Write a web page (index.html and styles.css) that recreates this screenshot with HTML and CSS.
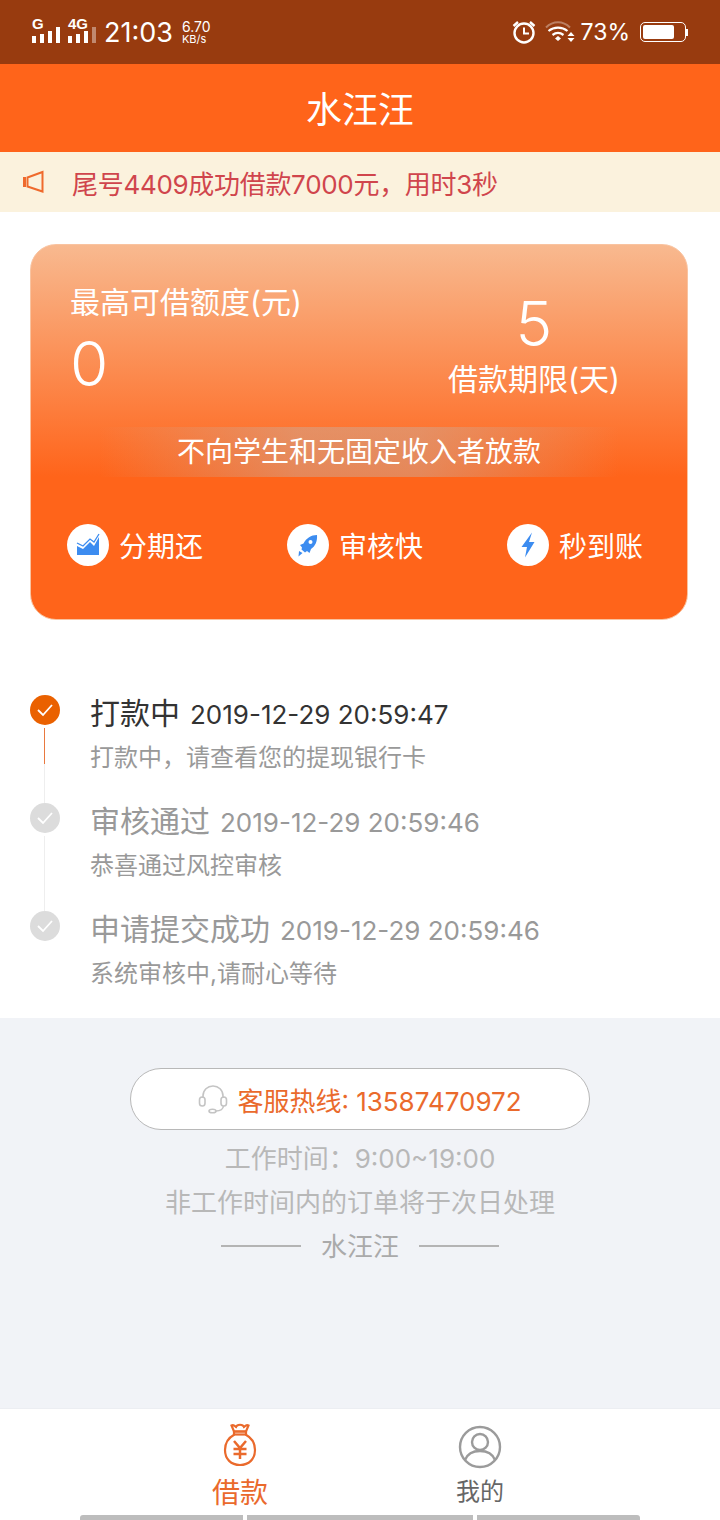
FILE: index.html
```html
<!DOCTYPE html>
<html lang="zh">

<head>
    <meta charset="UTF-8" />
    <meta name="viewport" content="width=device-width, initial-scale=1.0" />
    <title>水汪汪</title>
    <link rel="stylesheet" href="styles.css">
</head>

<body>
    <div class="phone">
        <div class="status-bar">
            <div class="status-left">
                <div class="signal">
                    <span class="net">G</span>
                    <svg class="bars" width="28" height="16" viewBox="0 0 28 16" fill="#fff"><rect x="0" y="9" width="4" height="7"/><rect x="8" y="7" width="4" height="9"/><rect x="16" y="4" width="4" height="12"/><rect x="24" y="0" width="4" height="16"/></svg>
                </div>
                <div class="signal">
                    <span class="net">4G</span>
                    <svg class="bars" width="28" height="16" viewBox="0 0 28 16" fill="#fff"><rect x="0" y="9" width="4" height="7"/><rect x="8" y="7" width="4" height="9"/><rect x="16" y="4" width="4" height="12"/><rect x="24" y="0" width="4" height="16" opacity="0.4"/></svg>
                </div>
                <span class="clock">21:03</span>
                <div class="speed"><span>6.70</span><span class="speed-unit">KB/s</span></div>
            </div>
            <div class="status-right">
                <svg width="24" height="24" viewBox="0 0 24 24" fill="none" stroke="#fff"><circle cx="12" cy="13" r="9.500" stroke-width="2.400"/><path d="M12 7.500V13.500H17" stroke-width="2"/><path d="M1.500 6 6 2M22.500 6 18 2" stroke-width="2.400"/></svg>
                <svg class="wifi" width="30" height="22" viewBox="0 0 30 22" fill="none" stroke="#fff"><path d="M1 6.500C8 -0.500 18 -0.500 25 6.500" stroke-width="2" opacity="0.35"/><path d="M3.500 10C9 5.500 17 5.500 22.500 10" stroke-width="2.200"/><path d="M7.500 14C10.800 11.500 15.200 11.500 18.500 14" stroke-width="2.200"/><path d="M10 17.500 13 15 16 17.500 13 20Z" fill="#fff" stroke="none"/><path d="M26 11 29.500 15H22.500ZM26 21 22.500 17H29.500Z" fill="#fff" stroke="none"/></svg>
                <span class="battery-text">73%</span>
                <div class="battery"><div class="battery-body"><div class="battery-fill"></div></div><div class="battery-tip"></div></div>
            </div>
        </div>

        <div class="title-bar">水汪汪</div>

        <div class="notice">
            <svg width="24" height="24" viewBox="0 0 24 24" fill="none" stroke="#ef6a2c" stroke-width="2"><path d="M5.500 7.500 20.500 2V21.500L5.500 16.500Z"/><path d="M2.500 7V17" stroke-width="3"/></svg>
            <span>尾号4409成功借款7000元，用时3秒</span>
        </div>

        <div class="content">
            <div class="card">
                <div class="card-top">
                    <div class="limit">
                        <div class="card-label">最高可借额度(元)</div>
                        <div class="card-num">0</div>
                    </div>
                    <div class="term">
                        <div class="card-num">5</div>
                        <div class="card-label">借款期限(天)</div>
                    </div>
                </div>
                <div class="card-tip">不向学生和无固定收入者放款</div>
                <div class="features">
                    <div class="feature">
                        <span class="feature-icon">
                            <svg width="26" height="26" viewBox="0 0 26 26"><path d="M2 23V14L8 17 15 10 19 14 24 5V23Z" fill="#3c8cf0"/><path d="M2 11 8 14 15 7 19 10 24 2" fill="none" stroke="#3c8cf0" stroke-width="1.300"/></svg>
                        </span>
                        <span>分期还</span>
                    </div>
                    <div class="feature">
                        <span class="feature-icon">
                            <svg width="26" height="26" viewBox="0 0 26 26"><path d="M22 3C16 3 11.500 6 8.500 11.500L5 13 7 15.500 6.500 17.500 10 20.500 12 19 14.500 21 16 17C20.500 14 22.500 9 22 3Z" fill="#3c8cf0"/><circle cx="15.500" cy="10" r="2" fill="#fff"/><path d="M4 19 7.500 21 3.500 24.500Z" fill="#3c8cf0"/></svg>
                        </span>
                        <span>审核快</span>
                    </div>
                    <div class="feature">
                        <span class="feature-icon">
                            <svg width="26" height="26" viewBox="0 0 26 26"><path d="M17 0.500 6.500 15H12L10 25.500 19.500 10H14Z" fill="#3c8cf0"/></svg>
                        </span>
                        <span>秒到账</span>
                    </div>
                </div>
            </div>

            <div class="timeline">
                <div class="step step-active">
                    <div class="step-mark">
                        <span class="dot"><svg width="18" height="14" viewBox="0 0 18 14" fill="none" stroke="#fff" stroke-width="1.800"><path d="M2 7 7 12 16 2"/></svg></span>
                        <span class="line"><span class="line-fill"></span></span>
                    </div>
                    <div class="step-body">
                        <div class="step-title"><span class="step-name">打款中</span><span>2019-12-29 20:59:47</span></div>
                        <div class="step-desc">打款中，请查看您的提现银行卡</div>
                    </div>
                </div>
                <div class="step">
                    <div class="step-mark">
                        <span class="dot"><svg width="18" height="14" viewBox="0 0 18 14" fill="none" stroke="#fff" stroke-width="1.800"><path d="M2 7 7 12 16 2"/></svg></span>
                        <span class="line"></span>
                    </div>
                    <div class="step-body">
                        <div class="step-title"><span class="step-name">审核通过</span><span>2019-12-29 20:59:46</span></div>
                        <div class="step-desc">恭喜通过风控审核</div>
                    </div>
                </div>
                <div class="step">
                    <div class="step-mark">
                        <span class="dot"><svg width="18" height="14" viewBox="0 0 18 14" fill="none" stroke="#fff" stroke-width="1.800"><path d="M2 7 7 12 16 2"/></svg></span>
                    </div>
                    <div class="step-body">
                        <div class="step-title"><span class="step-name">申请提交成功</span><span>2019-12-29 20:59:46</span></div>
                        <div class="step-desc">系统审核中,请耐心等待</div>
                    </div>
                </div>
            </div>
        </div>

        <div class="footer-area">
            <div class="hotline">
                <svg width="30" height="30" viewBox="0 0 30 30" fill="none" stroke="#c4c4c4" stroke-width="1.600"><path d="M5 14V12C5 6 9.500 2 15 2S25 6 25 12V14"/><rect x="1.500" y="13" width="5.500" height="9" rx="2.700"/><rect x="23" y="13" width="5.500" height="9" rx="2.700"/><path d="M25.500 22C25 25.500 22 27 18 27"/><ellipse cx="14.500" cy="27" rx="3.500" ry="1.800"/></svg>
                <span>客服热线: 13587470972</span>
            </div>
            <div class="foot-line">工作时间：9:00~19:00</div>
            <div class="foot-line">非工作时间内的订单将于次日处理</div>
            <div class="brand"><span class="rule"></span><span>水汪汪</span><span class="rule"></span></div>
        </div>

        <div class="tabbar">
            <div class="tab tab-active">
                <svg width="36" height="44" viewBox="0 0 36 44" fill="none" stroke="#ea6a2c" stroke-width="2.200"><path d="M9.500 2.500C12 1 13 3.500 14 4 15 1 21 1 22 4 23 3.500 24 1 26.500 2.500L24 8.500H12Z"/><rect x="12" y="8.500" width="12" height="3"/><path d="M12.500 11.500C6 15 3 21 3 27C3 36 9 42 18 42S33 36 33 27C33 21 30 15 23.500 11.500"/><path d="M12 18 18 25 24 18M18 25V36M11.500 26H24.500M11.500 31H24.500" stroke-width="2.500"/></svg>
                <span>借款</span>
            </div>
            <div class="tab">
                <svg class="tab-person" width="44" height="44" viewBox="0 0 44 44" fill="none" stroke="#9b9b9b" stroke-width="2.400"><circle cx="22" cy="22" r="20"/><circle cx="22" cy="17" r="8"/><path d="M7 35C9.500 28.500 15 26 22 26S34.500 28.500 37 35"/></svg>
                <span>我的</span>
            </div>
        </div>

        <div class="nav-hint">
            <span class="hint hint-left"></span>
            <span class="hint hint-mid"></span>
            <span class="hint hint-right"></span>
        </div>
    </div>
</body>

</html>
```
FILE: styles.css
```css
* {
    box-sizing: border-box;
}

html,
body {
    margin: 0;
    padding: 0;
}

body {
    font-family: Inter, "Noto Sans CJK SC", sans-serif;
    background-color: #fff;
}

.phone {
    width: 720px;
    height: 1520px;
    display: flex;
    flex-direction: column;
    overflow: hidden;
}

/* status bar */
.status-bar {
    height: 64px;
    flex: none;
    background-color: #983b0f;
    color: #fff;
    display: flex;
    justify-content: space-between;
    align-items: center;
    padding: 0 32px 0 32px;
}

.status-left,
.status-right {
    display: flex;
    align-items: center;
}

.signal {
    width: 36px;
    height: 26px;
    margin-top: -4px;
    position: relative;
    display: flex;
    align-items: flex-end;
}

.net {
    position: absolute;
    top: -2px;
    left: 0;
    font-family: "Liberation Sans", sans-serif;
    font-size: 15px;
    font-weight: 700;
}

.clock {
    font-size: 27px;
    margin-left: 0;
}

.speed {
    display: flex;
    flex-direction: column;
    font-size: 14px;
    line-height: 13px;
    margin: 1px 0 0 9px;
}

.speed-unit {
    font-size: 11px;
}

.status-right {
    gap: 6px;
}

.wifi {
    margin-left: 3px;
}

.battery-text {
    font-size: 23px;
}

.battery {
    display: flex;
    align-items: center;
    margin-left: 4px;
}

.battery-body {
    width: 46px;
    height: 20px;
    border: 1px solid #fff;
    border-radius: 5px;
    padding: 2px;
}

.battery-fill {
    width: 31px;
    height: 14px;
    background-color: #fff;
    border-radius: 2px;
}

.battery-tip {
    width: 2px;
    height: 7px;
    background-color: #fff;
}

/* header */
.title-bar {
    height: 88px;
    flex: none;
    background-color: #ff641a;
    color: #fff;
    font-size: 36px;
    text-align: center;
    line-height: 92px;
}

.notice {
    height: 60px;
    flex: none;
    background-color: #fbf2dd;
    color: #d0454c;
    font-size: 26px;
    letter-spacing: -0.3px;
    display: flex;
    align-items: center;
    gap: 26px;
    padding: 0 0 0 22px;
}

.content {
    flex: none;
    height: 806px;
    background-color: #fff;
    padding: 32px 32px 0 30px;
}

/* orange card */
.card {
    height: 376px;
    border-radius: 26px;
    border: 1px solid #f9c3a0;
    background: linear-gradient(180deg, #f8b98f 0%, #ff641a 62%, #ff641a 100%);
    color: #fff;
    padding: 37px 0 0;
}

.card-top {
    display: flex;
    height: 153px;
}

.limit {
    width: 400px;
    padding-left: 39px;
}

.term {
    flex: 1;
    padding-top: 3px;
    padding-right: 50px;
    text-align: center;
}

.card-label {
    font-size: 30px;
    line-height: 40px;
}

.card-num {
    font-size: 62px;
    font-weight: 300;
    line-height: 62px;
    margin-top: 11px;
}

.term .card-num {
    height: 56px;
    margin-top: 8px;
}

.term .card-label {
    line-height: 36px;
    margin-top: 12px;
}

.card-tip {
    height: 50px;
    margin: -8px 68px 0;
    font-size: 28px;
    line-height: 50px;
    text-align: center;
    background: linear-gradient(90deg, rgba(205, 170, 150, 0) 0%, rgba(205, 170, 150, 0.5) 38%, rgba(205, 170, 150, 0.5) 62%, rgba(205, 170, 150, 0) 100%);
}

.features {
    display: flex;
    justify-content: space-between;
    padding: 47px 44px 0 36px;
}

.feature {
    display: flex;
    align-items: center;
    gap: 10px;
    font-size: 28px;
}

.feature-icon {
    width: 42px;
    height: 42px;
    border-radius: 50%;
    background-color: #fff;
    display: flex;
    align-items: center;
    justify-content: center;
}

/* timeline */
.timeline {
    margin-top: 75px;
}

.step {
    display: flex;
    height: 108px;
    gap: 30px;
}

.step-mark {
    width: 30px;
    flex: none;
    display: flex;
    flex-direction: column;
}

.dot {
    width: 30px;
    height: 30px;
    flex: none;
    border-radius: 50%;
    background-color: #dcdcdc;
    display: flex;
    align-items: center;
    justify-content: center;
}

.step-active .dot {
    background-color: #ea6100;
}

.line {
    width: 1px;
    flex: 1;
    margin: 3px 0 0 14px;
    background-color: #eee;
}

.line-fill {
    display: block;
    height: 36px;
    background-color: #e9793f;
}

.step-title {
    font-size: 26px;
    line-height: 36px;
    color: #999;
    display: flex;
    align-items: center;
    gap: 10px;
    margin-top: 2px;
}

.step-name {
    font-size: 30px;
    margin-top: -4px;
}

.step-active .step-title {
    color: #333;
}

.step-desc {
    font-size: 24px;
    line-height: 30px;
    margin-top: 10px;
    color: #999;
}

/* footer */
.footer-area {
    flex: 1;
    background-color: #f1f3f7;
    display: flex;
    flex-direction: column;
    align-items: center;
    padding-top: 50px;
}

.hotline {
    width: 460px;
    height: 62px;
    flex: none;
    border: 1px solid #b8b8b8;
    border-radius: 31px;
    background-color: #fff;
    color: #ea6a2c;
    font-size: 26px;
    display: flex;
    align-items: center;
    justify-content: center;
    gap: 9px;
}

.foot-line {
    font-size: 26px;
    line-height: 44px;
    color: #b8b8b8;
}

.hotline + .foot-line {
    margin-top: 7px;
}

.brand {
    display: flex;
    align-items: center;
    gap: 20px;
    font-size: 26px;
    line-height: 44px;
    color: #aaa;
}

.rule {
    width: 80px;
    height: 2px;
    margin-top: -2px;
    background-color: #b4b4b4;
}

/* bottom tabs */
.tabbar {
    height: 107px;
    flex: none;
    background-color: #fff;
    border-top: 1px solid #eceef2;
    display: flex;
    padding-top: 14px;
}

.tab {
    flex: none;
    width: 240px;
    display: flex;
    flex-direction: column;
    align-items: center;
    color: #666;
    font-size: 24px;
    gap: 3px;
}

.tab:first-child {
    margin-left: 120px;
}

.tab-person {
    margin-top: 2px;
}

.tab-active {
    color: #ea6a2c;
    font-size: 28px;
    gap: 4px;
}

.nav-hint {
    height: 5px;
    flex: none;
    padding: 0 80px;
    display: flex;
    gap: 4px;
}

.hint {
    background-color: #bdbdbd;
    height: 5px;
}

.hint-left {
    width: 163px;
    border-radius: 3px 0 0 0;
}

.hint-mid {
    width: 226px;
}

.hint-right {
    width: 163px;
    border-radius: 0 3px 0 0;
}
```
